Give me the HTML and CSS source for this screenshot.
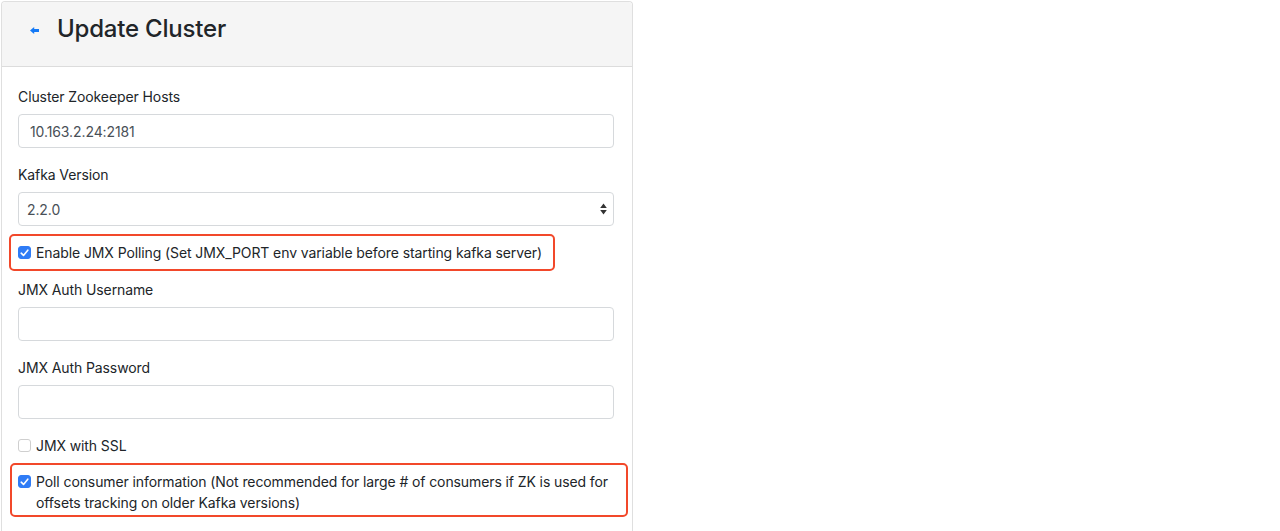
FILE: index.html
```html
<!DOCTYPE html>
<html>
<head>
<meta charset="utf-8">
<link rel="stylesheet" href="styles.css">
</head>
<body>
<div class="card">
  <div class="card-header">
    <a class="back" href="#"><svg width="9" height="7" viewBox="0 0 9 7"><path d="M0 3.5 L4.2 0 L4.2 2 L9 2 L9 5 L4.2 5 L4.2 7 Z" fill="#1479f6"/></svg></a>
    <h1 class="title">Update Cluster</h1>
  </div>
  <div class="card-body">
    <div class="form-group">
      <label class="label">Cluster Zookeeper Hosts</label>
      <div class="control">10.163.2.24:2181</div>
    </div>
    <div class="form-group">
      <label class="label">Kafka Version</label>
      <div class="control select"><span class="sel-val">2.2.0</span>
        <svg class="updown" width="7" height="12" viewBox="0 0 7 12"><path d="M3.5 0.5 L6.8 5 L0.2 5 Z M3.5 11.5 L6.8 7 L0.2 7 Z" fill="#333"/></svg>
      </div>
    </div>
    <div class="check-row">
      <span class="mark on"><svg width="9" height="8" viewBox="0 0 9 8"><path d="M1.2 4.2 L3.5 6.4 L7.8 1.2" fill="none" stroke="#fff" stroke-width="1.6" stroke-linecap="round" stroke-linejoin="round"/></svg></span>
      <span>Enable JMX Polling (Set JMX_PORT env variable before starting kafka server)</span>
      <span class="hl hl1"></span>
    </div>
    <div class="form-group">
      <label class="label">JMX Auth Username</label>
      <div class="control"></div>
    </div>
    <div class="form-group">
      <label class="label">JMX Auth Password</label>
      <div class="control"></div>
    </div>
    <div class="check-row tight">
      <span class="mark"></span>
      <span>JMX with SSL</span>
    </div>
    <div class="check-row">
      <span class="mark on"><svg width="9" height="8" viewBox="0 0 9 8"><path d="M1.2 4.2 L3.5 6.4 L7.8 1.2" fill="none" stroke="#fff" stroke-width="1.6" stroke-linecap="round" stroke-linejoin="round"/></svg></span>
      <span class="wrap">Poll consumer information (Not recommended for large # of consumers if ZK is used for offsets tracking on older Kafka versions)</span>
      <span class="hl hl2"></span>
    </div>
  </div>
</div>
</body>
</html>
```

FILE: styles.css
```css
* { box-sizing: border-box; }
html, body { margin: 0; padding: 0; background: #fff; }
body {
  font-family: Inter, "Liberation Sans", Arial, sans-serif;
  font-size: 14px;
  line-height: 21px;
  color: #212529;
  letter-spacing: -0.1px;
}
.card {
  margin: 1px 0 0 1px;
  width: 632px;
  border: 1px solid #dfdfdf;
  border-bottom: none;
  border-radius: 4px 4px 0 0;
  height: 540px;
}
.card-header {
  height: 65px;
  background: #f5f5f5;
  border-bottom: 1px solid #dcdcdc;
  display: flex;
  align-items: center;
  padding-left: 28px;
  padding-bottom: 10px;
  border-radius: 4px 4px 0 0;
}
.back { display: flex; align-items: center; margin-top: 3px; }
.title {
  margin: 0 0 0 18px;
  font-size: 24px;
  font-weight: 500;
  line-height: 30px;
  color: #212529;
  letter-spacing: -0.2px;
}
.card-body { padding: 19px 18px 0 16px; }
.form-group { margin-bottom: 16px; }
.label { display: block; margin-bottom: 7px; }
.control {
  height: 34px;
  width: 596px;
  border: 1px solid #d6d9dc;
  border-radius: 4px;
  padding: 6px 11px;
  color: #495057;
  line-height: 21px;
  display: flex;
  align-items: center;
}
.select { padding-left: 8px; padding-right: 6px; justify-content: space-between; }
.check-row {
  position: relative;
  display: flex;
  align-items: flex-start;
  margin-bottom: 16px;
  width: 596px;
}
.check-row.tight { margin-bottom: 15px; }
.mark {
  flex: none;
  width: 13px;
  height: 13px;
  margin: 4px 5px 0 0;
  border: 1px solid #cfcfcf;
  border-radius: 3px;
  background: #fff;
  display: flex;
  align-items: center;
  justify-content: center;
}
.mark.on { background: #2f7cf6; border-color: #2f7cf6; }
.wrap { width: 590px; }
.hl {
  position: absolute;
  border: 2px solid #f2482a;
  border-radius: 5px;
  pointer-events: none;
}
.hl1 { left: -9px; top: -8px; width: 546px; height: 37px; }
.hl2 { left: -8px; top: -8px; width: 618px; height: 54px; }
```
